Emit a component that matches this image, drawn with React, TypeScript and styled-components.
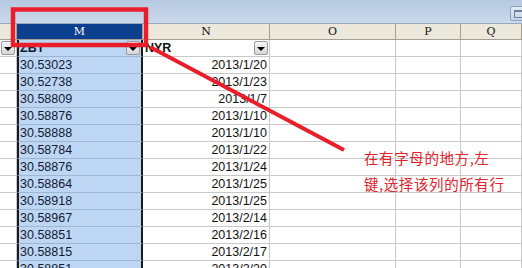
import React from "react";
import styled, { createGlobalStyle, css } from "styled-components";

const GlobalStyle = createGlobalStyle`
  html, body { margin: 0; padding: 0; background: #ffffff; }
  body { overflow: hidden; font-family: "Liberation Sans", Arial, sans-serif; }
`;

const COLS = "17px 126px 127px 126px 65px 61px";

const Page = styled.div`
  position: relative;
  width: 522px;
  height: 268px;
  overflow: hidden;
  background: #fff;
`;

const TopBar = styled.div`
  height: 24px;
  background: linear-gradient(#b6c9e1, #cbd9ea);
  border-bottom: 1px solid #97a9bf;
  display: flex;
  justify-content: flex-end;
  align-items: flex-start;
  padding-top: 6px;
  box-sizing: border-box;
`;

const CornerButton = styled.div`
  width: 16px;
  height: 15px;
  margin-right: -4px;
  box-sizing: border-box;
  border: 1px solid #8ea3c0;
  border-radius: 2px;
  background: linear-gradient(#e4ecf6, #c4d3e6);
  display: flex;
  align-items: center;
  padding-left: 3px;
  &::after {
    content: "";
    width: 7px;
    height: 5px;
    border: 1px solid #6d7f99;
    border-top-width: 2px;
  }
`;

const Row = styled.div<{ $h: number }>`
  display: grid;
  grid-template-columns: ${COLS};
  height: ${(p) => p.$h}px;
`;

const HeadCell = styled.div<{ $sel?: boolean }>`
  box-sizing: border-box;
  background: ${(p) => (p.$sel ? "#0c3f8e" : "#ece8dc")};
  color: ${(p) => (p.$sel ? "#ffffff" : "#111")};
  border-right: 1px solid #a39e90;
  border-bottom: 1px solid #a39e90;
  font-family: "DejaVu Serif", "Liberation Serif", serif;
  font-size: 11px;
  display: flex;
  align-items: center;
  justify-content: center;
  line-height: 1;
`;

const Cell = styled.div<{ $sel?: boolean; $right?: boolean; $bold?: boolean }>`
  position: relative;
  box-sizing: border-box;
  border-right: 1px solid #c9c9c9;
  border-bottom: 1px solid #c9c9c9;
  font-size: 12.5px;
  color: #111;
  display: flex;
  align-items: center;
  padding: 0 2px 0 2px;
  white-space: nowrap;
  overflow: visible;
  justify-content: ${(p) => (p.$right ? "flex-end" : "flex-start")};
  font-weight: ${(p) => (p.$bold ? 700 : 400)};
  ${(p) =>
    p.$sel &&
    css`
      background: #bcd6f4;
      border-left: 2px solid #1a1a1a;
      border-right: 2px solid #1a1a1a;
      border-bottom-color: #9fb6d2;
      color: #151a33;
      padding-left: 1px;
    `}
`;

const Filter = styled.span`
  position: absolute;
  right: 1px;
  top: 1px;
  width: 14px;
  height: 14px;
  box-sizing: border-box;
  border: 1px solid #9a9a9a;
  border-radius: 2px;
  background: linear-gradient(#f7f7f7, #d6d6d6);
  display: flex;
  align-items: center;
  justify-content: center;
  &::after {
    content: "";
    border-left: 4px solid transparent;
    border-right: 4px solid transparent;
    border-top: 4px solid #000;
    margin-top: 1px;
  }
`;

const Overlay = styled.svg`
  position: absolute;
  left: 0;
  top: 0;
  pointer-events: none;
`;

const Note = styled.div`
  position: absolute;
  left: 364px;
  top: 145px;
  color: #e3222a;
  font-family: "Noto Sans CJK SC", "Noto Sans", sans-serif;
  font-size: 14.5px;
  line-height: 26px;
  letter-spacing: 0.6px;
`;

const data: [string, string][] = [
  ["30.53023", "2013/1/20"],
  ["30.52738", "2013/1/23"],
  ["30.58809", "2013/1/7"],
  ["30.58876", "2013/1/10"],
  ["30.58888", "2013/1/10"],
  ["30.58784", "2013/1/22"],
  ["30.58876", "2013/1/24"],
  ["30.58864", "2013/1/25"],
  ["30.58918", "2013/1/25"],
  ["30.58967", "2013/2/14"],
  ["30.58851", "2013/2/16"],
  ["30.58815", "2013/2/17"],
  ["30.58851", "2013/2/20"],
];

export default function App() {
  return (
    <Page>
      <GlobalStyle />
      <TopBar>
        <CornerButton />
      </TopBar>
      <Row $h={16}>
        <HeadCell />
        <HeadCell $sel>M</HeadCell>
        <HeadCell>N</HeadCell>
        <HeadCell>O</HeadCell>
        <HeadCell>P</HeadCell>
        <HeadCell>Q</HeadCell>
      </Row>
      <Row $h={17}>
        <Cell>
          <Filter />
        </Cell>
        <Cell $sel $bold>
          ZBT
          <Filter />
        </Cell>
        <Cell $bold>
          NYR
          <Filter />
        </Cell>
        <Cell />
        <Cell />
        <Cell />
      </Row>
      {data.map(([v, d], i) => (
        <Row $h={17} key={i}>
          <Cell />
          <Cell $sel>{v}</Cell>
          <Cell $right>{d}</Cell>
          <Cell />
          <Cell />
          <Cell />
        </Row>
      ))}
      <Overlay width={522} height={268}>
        <rect x={13} y={9.5} width={133} height={35.5} fill="none" stroke="#e81f2b" strokeWidth={4.5} />
        <line x1={150} y1={47} x2={344} y2={150} stroke="#e81f2b" strokeWidth={4} />
      </Overlay>
      <Note>
        在有字母的地方,左
        <br />
        键,选择该列的所有行
      </Note>
    </Page>
  );
}
